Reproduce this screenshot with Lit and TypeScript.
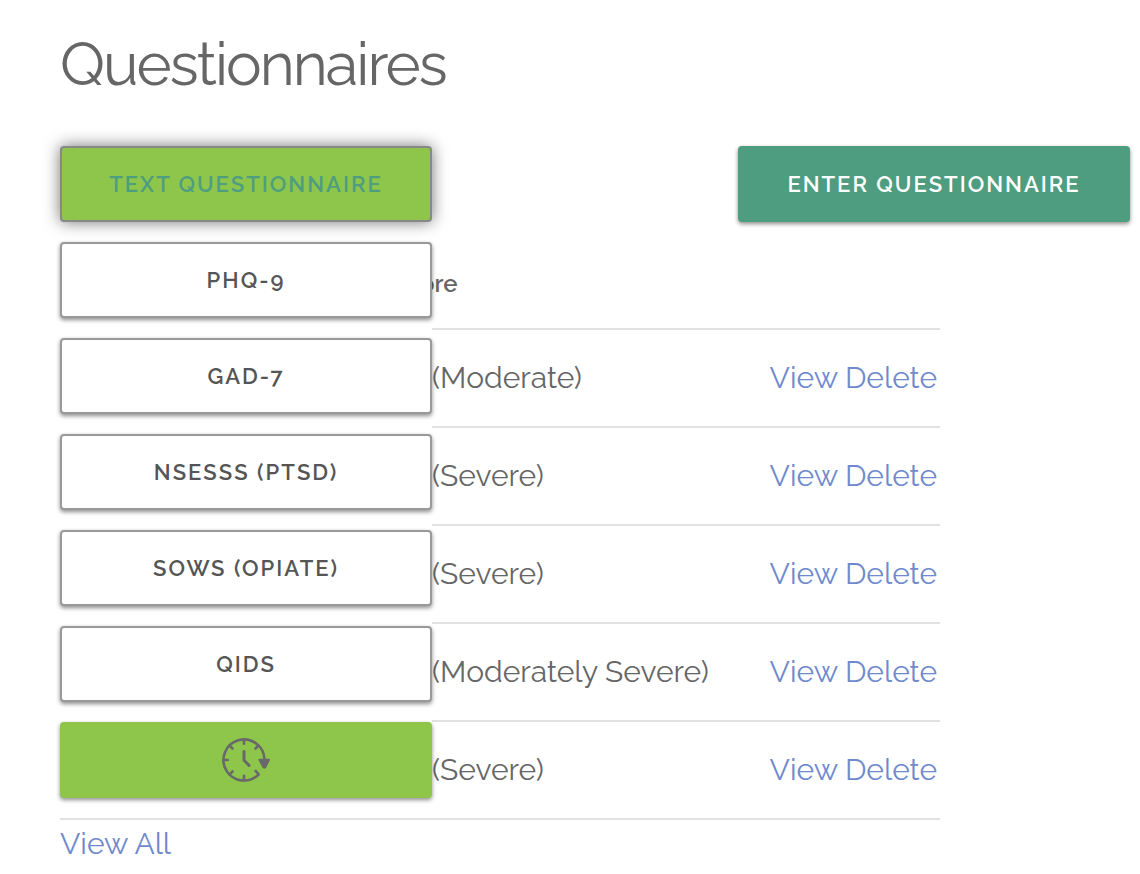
import { LitElement, html, css } from "lit";
import { customElement, state } from "lit/decorators.js";

@customElement("clock-icon")
class ClockIcon extends LitElement {
  static styles = css`
    :host { display: block; width: 48px; height: 46px; }
    svg { display: block; width: 100%; height: 100%; }
    .line { fill: none; stroke: #696969; stroke-width: 2.6; stroke-linecap: round; stroke-linejoin: round; }
    .hand { stroke-width: 3; }
    .head { fill: #696969; stroke: #696969; stroke-width: 2; stroke-linejoin: round; }
  `;
  render() {
    return html`<svg viewBox="0 0 48 46" aria-hidden="true">
      <path class="line" d="M42.5 22.5A20.5 20.5 0 1 0 36.7 37.3L33.6 33.9" />
      <path class="line" d="M22 2.6V6.8M22 43V38.8M1.6 23H5.8M7.6 8.6L10.5 11.5M36.4 8.6L33.5 11.5M7.6 37.4L10.5 34.5" />
      <path class="line hand" d="M22 14.4V23.2L27 28.4" />
      <path class="head" d="M37.4 22.8H47L43.2 30.2Q42.3 31.4 41.4 30.2Z" />
    </svg>`;
  }
}

@customElement("app-root")
class AppRoot extends LitElement {
  @state() private scores = ["(Moderate)", "(Severe)", "(Severe)", "(Moderately Severe)", "(Severe)"];
  @state() private options = ["PHQ-9", "GAD-7", "NSESSS (PTSD)", "SOWS (Opiate)", "QIDS"];

  static styles = css`
    :host {
      display: block;
      font-family: Raleway, Lato, "Open Sans", sans-serif;
      font-size: 30px;
      line-height: 48px;
      color: #666;
    }
    main { padding: 28px 10px 0 60px; }
    h1 { margin: 0 0 46px; font-size: 60px; line-height: 72px; font-weight: 400; letter-spacing: -2px; }
    .toolbar { display: flex; justify-content: space-between; align-items: flex-start; }
    .picker { position: relative; width: 372px; }
    .menu {
      position: absolute;
      top: 100%;
      left: 0;
      right: 0;
      padding-top: 20px;
      display: grid;
      gap: 20px;
    }
    .menu::before { content: ""; position: absolute; inset: 20px 0 0; background: #fff; }
    .btn {
      position: relative;
      box-sizing: border-box;
      display: flex;
      align-items: center;
      justify-content: center;
      width: 100%;
      height: 76px;
      margin: 0;
      padding: 0 48px;
      border: 2px solid #999;
      border-radius: 4px;
      background: #fff;
      color: #555;
      font: inherit;
      font-size: 22px;
      font-weight: 600;
      letter-spacing: 2px;
      text-transform: uppercase;
      white-space: nowrap;
      box-shadow: 0 2px 4px rgba(0, 0, 0, 0.45);
    }
    .btn.open { border-color: #888; background: #8dc64b; color: #4f9d80; box-shadow: 0 0 16px rgba(0, 0, 0, 0.55); }
    .btn.schedule { border-color: #8dc64b; background: #8dc64b; }
    .btn.enter { width: 392px; border-color: #4f9d80; background: #4f9d80; color: #fff; }
    table { width: 100%; max-width: 880px; margin-top: 20px; border-collapse: separate; border-spacing: 0; table-layout: fixed; }
    .spacer { width: 332px; }
    .links { width: 180px; }
    th, td { box-sizing: border-box; padding: 0; border-bottom: 2px solid #e1e1e1; font-weight: 400; text-align: left; white-space: nowrap; }
    th { height: 88px; padding-bottom: 2px; font-size: 24px; font-weight: 600; }
    td { height: 98px; }
    .score { padding-left: 40px; }
    .actions { padding-right: 3px; text-align: right; }
    a { color: #708acd; text-decoration: none; }
  `;

  render() {
    return html`<main>
      <h1>Questionnaires</h1>
      <div class="toolbar">
        <div class="picker">
          <button class="btn open" aria-expanded="true">Text Questionnaire</button>
          <div class="menu">
            ${this.options.map((o) => html`<button class="btn">${o}</button>`)}
            <button class="btn schedule" aria-label="Schedule"><clock-icon></clock-icon></button>
          </div>
        </div>
        <div><button class="btn enter">Enter Questionnaire</button></div>
      </div>
      <table>
        <colgroup><col class="spacer" /><col /><col class="links" /></colgroup>
        <thead><tr><th></th><th>Score</th><th></th></tr></thead>
        <tbody>
          ${this.scores.map((s) => html`<tr>
            <td></td>
            <td class="score">${s}</td>
            <td class="actions"><a href="#view">View</a> <a href="#delete">Delete</a></td>
          </tr>`)}
        </tbody>
      </table>
      <a href="#all">View All</a>
    </main>`;
  }
}
